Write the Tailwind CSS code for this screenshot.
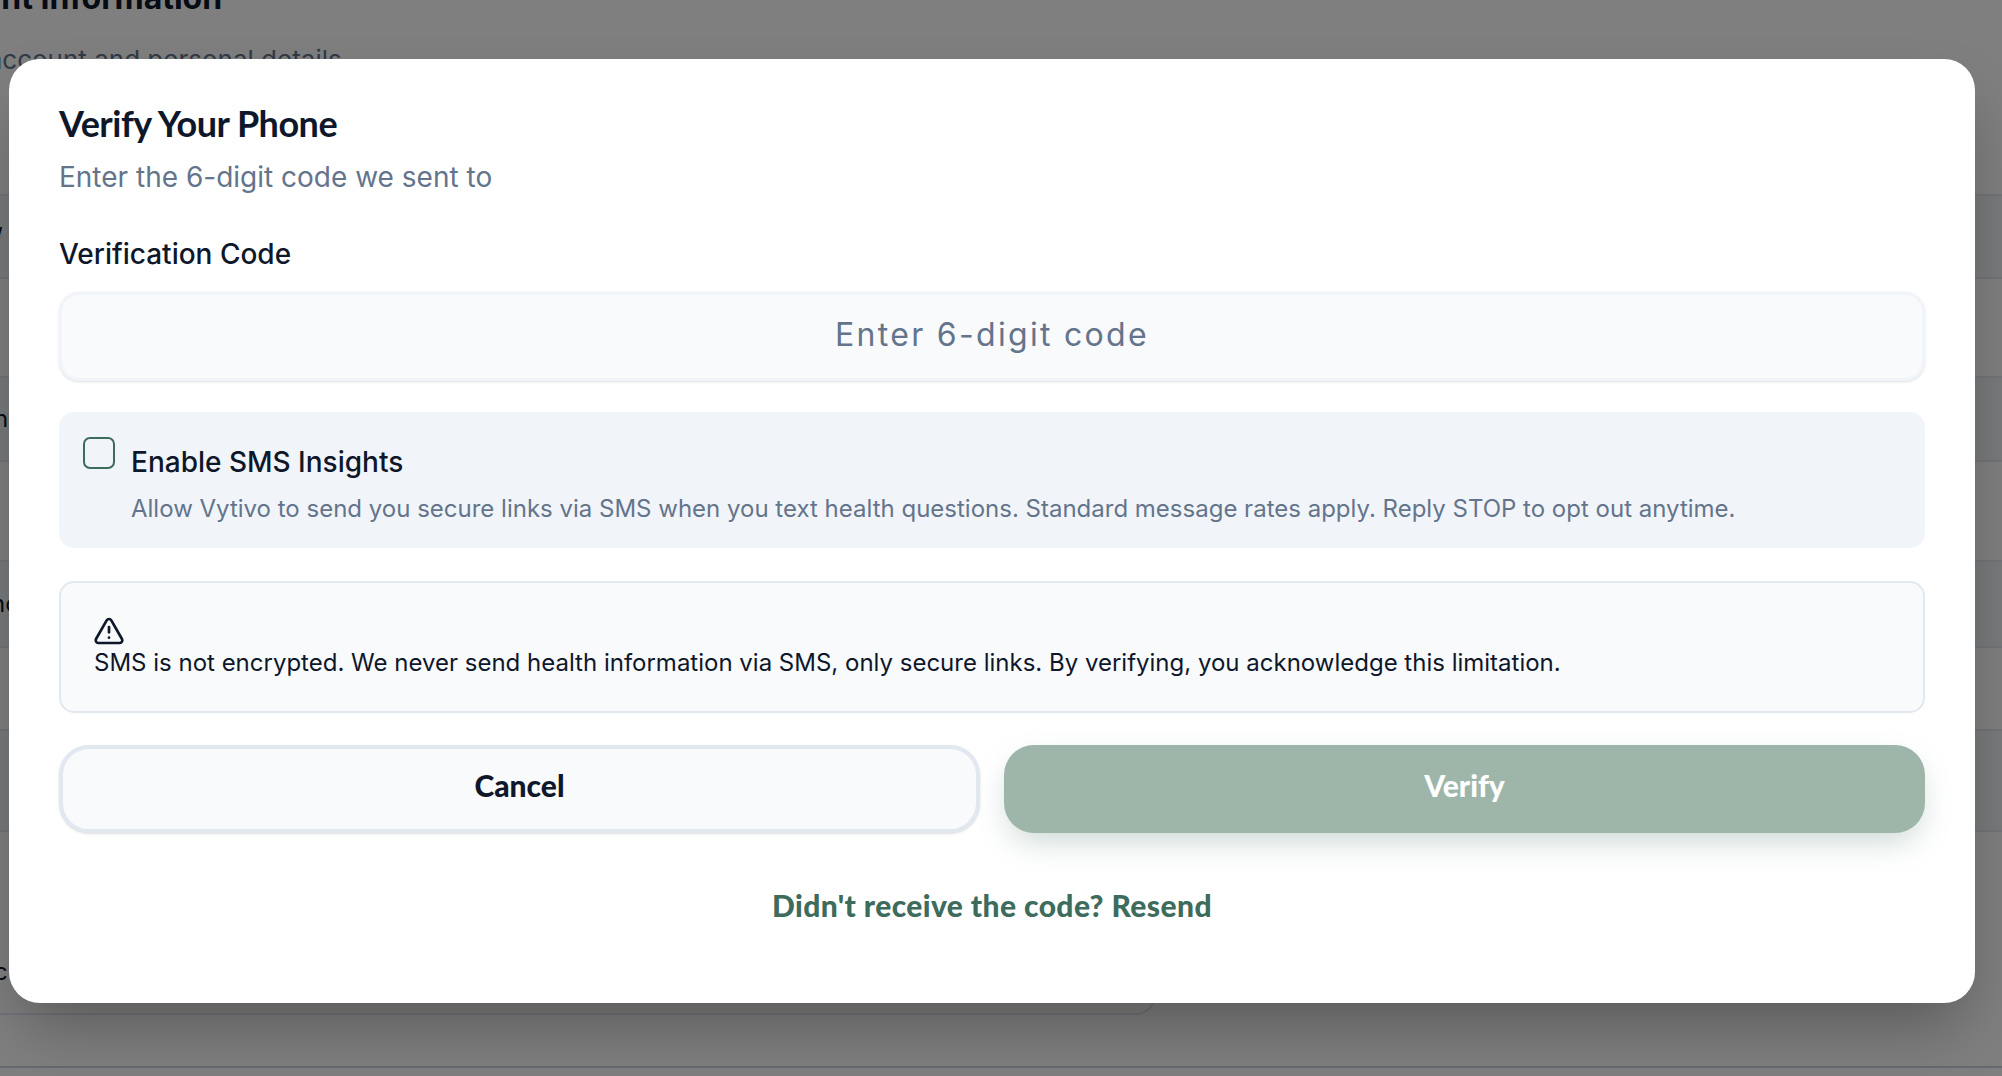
<!DOCTYPE html>
<html lang="en">
<head>
  <meta charset="UTF-8" />
  <title>Verify Your Phone</title>
  <script src="https://cdn.jsdelivr.net/npm/@tailwindcss/browser@4"></script>
</head>
<body class="h-[1076px] w-full overflow-hidden bg-white font-['Inter',sans-serif]">
  <!-- page behind the dialog -->
  <div class="relative h-[1076px] w-full overflow-hidden bg-white">
    <div class="-mt-[22px] -ml-[99px] text-[32px] font-bold leading-[40px] text-[#0f172a]">Account Information</div>
    <div class="mt-[26px] -ml-[76px] text-[26px] leading-[32px] text-[#64748b]">Your account and personal details</div>

    <div class="mt-[118px] flex flex-col text-[24px] text-[#0f172a]">
      <div class="flex h-[85px] items-center border-y-2 border-[#e2e8f0] bg-[#f1f5f9] -ml-[6px]">/</div>
      <div class="h-[99px] border-b-2 border-[#e2e8f0]"></div>
      <div class="flex h-[84px] items-center border-b-2 border-[#e2e8f0] bg-[#f1f5f9] -ml-[6px]">n</div>
      <div class="h-[100px] border-b-2 border-[#e2e8f0]"></div>
      <div class="flex h-[86px] items-center border-b-2 border-[#e2e8f0] bg-[#f1f5f9] -ml-[9px]">nc</div>
      <div class="h-[83px] border-b-2 border-[#e2e8f0]"></div>
      <div class="h-[101px] border-b-2 border-[#e2e8f0] bg-[#f1f5f9]"></div>
      <div class="h-[183px] w-[1162px] rounded-br-[20px] border-r-2 border-b-2 border-[#e2e8f0] -ml-[6px] pt-[122px]">c</div>
    </div>
    <div class="mt-[51px] h-[2px] w-full bg-[#cbd5e1]"></div>

    <!-- overlay -->
    <div class="absolute inset-0 bg-black/50"></div>

    <!-- dialog -->
    <div class="absolute left-[9px] top-[59px] flex h-[944px] w-[1966px] flex-col rounded-[31px] bg-white pr-[50px] pl-[50px] pt-[44px] shadow-[0_32px_64px_-12px_rgba(0,0,0,0.3)]">
      <h2 class="font-['Lato',sans-serif] text-[36px] font-bold leading-[40px] tracking-[-0.5px] text-[#0f172a]">Verify Your Phone</h2>
      <p class="mt-[16px] text-[28px] leading-[36px] text-[#64748b]">Enter the 6-digit code we sent to</p>

      <label class="mt-[39px] text-[28px] font-medium leading-[40px] text-[#0f172a]">Verification Code</label>
      <div class="mt-[18px] flex h-[89px] items-center justify-center rounded-[20px] border-[3px] border-[#f1f5f9] bg-[#f8fafc] pb-[3px] text-[32px] tracking-[2.3px] text-[#64748b] shadow-sm">Enter 6-digit code</div>

      <div class="mt-[31px] flex h-[136px] gap-[16px] rounded-[15px] bg-[#f1f5f9] pl-[24px] pt-[25px]">
        <div class="h-[32px] w-[32px] shrink-0 rounded-[7px] border-2 border-[#3d6b5c]"></div>
        <div>
          <div class="mt-[5px] text-[28px] font-medium leading-[40px] text-[#0f172a]">Enable SMS Insights</div>
          <div class="mt-[9px] text-[24px] leading-[36px] text-[#64748b]">Allow Vytivo to send you secure links via SMS when you text health questions. Standard message rates apply. Reply STOP to opt out anytime.</div>
        </div>
      </div>

      <div class="mt-[33px] flex h-[132px] flex-col rounded-[15px] border-2 border-[#e2e8f0] bg-[#f8fafc] pl-[33px] pt-[32px]">
        <svg class="-ml-[1px] h-[32px] w-[32px] text-[#0f172a]" viewBox="0 0 24 24" fill="none" stroke="currentColor" stroke-width="2" stroke-linecap="round" stroke-linejoin="round">
          <path d="m21.73 18-8-14a2 2 0 0 0-3.48 0l-8 14A2 2 0 0 0 4 21h16a2 2 0 0 0 1.73-3" />
          <path d="M12 9v4" />
          <path d="M12 17h.01" />
        </svg>
        <p class="text-[24px] leading-[32px] text-[#0f172a]">SMS is not encrypted. We never send health information via SMS, only secure links. By verifying, you acknowledge this limitation.</p>
      </div>

      <div class="mt-[32px] grid grid-cols-2 gap-[24px] font-['Lato',sans-serif] text-[30px] font-black">
        <button class="flex h-[88px] items-center justify-center rounded-[30px] border-[4px] border-[#e2e8f0] bg-[#f8fafc] pb-[7px] text-[#0f172a] shadow-sm">Cancel</button>
        <button class="flex h-[88px] items-center justify-center rounded-[30px] bg-[#9eb6aa] pb-[7px] text-white shadow-[0_13px_32px_-6px_rgba(61,107,92,0.28)]">Verify</button>
      </div>

      <div class="mt-[50px] text-center font-['Lato',sans-serif] text-[30px] font-black leading-[44px] tracking-[0.4px] text-[#3d6b5c]">Didn't receive the code? Resend</div>
    </div>
  </div>
</body>
</html>
